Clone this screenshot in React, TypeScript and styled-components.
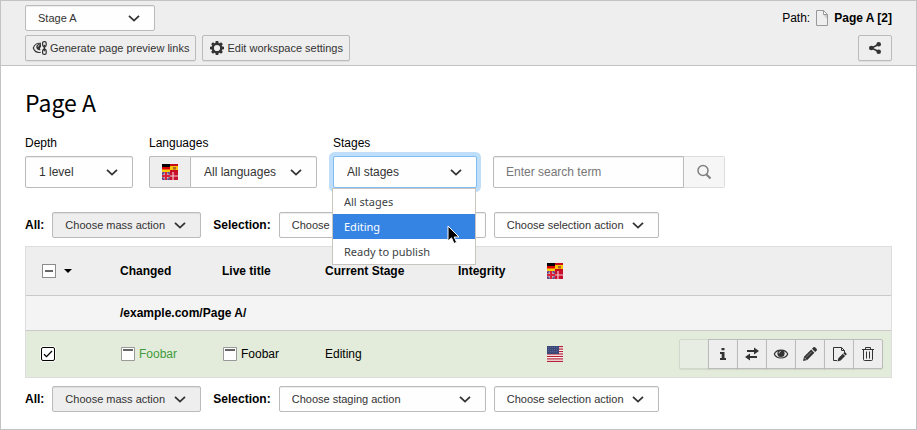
import React, { useEffect, useRef } from "react";
import styled, { createGlobalStyle, css } from "styled-components";

const GlobalStyle = createGlobalStyle`
  *, *::before, *::after { box-sizing: border-box; }
  body {
    margin: 0;
    background: #fff;
    color: #000;
    font: 12px/16px "Liberation Sans", Arial, sans-serif;
  }
  button, input, select { font-family: inherit; margin: 0; }
  svg { display: block; flex: none; }
`;

/* ---------- layout ---------- */

const Frame = styled.div`
  min-height: 100vh;
  border: 1px solid #c3c3c3;
`;

const DocHeader = styled.header`
  display: flex;
  flex-direction: column;
  gap: 4px;
  padding: 4px 24px;
  background: #eee;
  border-bottom: 1px solid #c3c3c3;
`;

const HeaderRow = styled.div`
  display: flex;
  align-items: center;
  justify-content: space-between;
`;

const ButtonBar = styled.div`
  display: flex;
  gap: 6px;
`;

const PathInfo = styled.div`
  display: flex;
  align-items: center;
  gap: 4px;
`;

const Content = styled.main`
  padding: 24px 24px 8px;
`;

const Title = styled.h1`
  margin: 0 0 21px;
  font: 400 23px/24px "Noto Sans CJK SC", "Noto Sans", sans-serif;
`;

const Filters = styled.form`
  display: flex;
  align-items: flex-end;
  gap: 16px;
  margin-bottom: 24px;
`;

const Field = styled.div`
  display: flex;
  flex-direction: column;
  gap: 5px;
`;

const InputGroup = styled.div`
  display: flex;
`;

const ActionBar = styled.div`
  display: flex;
  align-items: center;
  gap: 8px;
  margin: 8px 0;
`;

const ActionLabel = styled.label<{ $spaced?: boolean }>`
  font-weight: 700;
  margin-left: ${(p) => (p.$spaced ? 4 : 0)}px;
`;

/* ---------- controls ---------- */

const SelectWrap = styled.div<{ $width: number }>`
  position: relative;
  width: ${(p) => p.$width}px;
`;

const SelectBox = styled.select<{ $small?: boolean; $muted?: boolean; $focus?: boolean; $joined?: boolean }>`
  display: block;
  appearance: none;
  width: 100%;
  height: ${(p) => (p.$small ? 26 : 32)}px;
  padding: 0 32px 0 ${(p) => (p.$small ? 12 : 13)}px;
  border: 1px solid #bbb;
  border-radius: ${(p) => (p.$joined ? "0 2px 2px 0" : "2px")};
  background: ${(p) => (p.$muted ? "#eee" : "#fefefe")};
  color: #333;
  font-size: ${(p) => (p.$small ? 11 : 12)}px;
  box-shadow: inset 0 1px 1px rgba(0, 0, 0, 0.075);
  outline: none;
  ${(p) =>
    p.$focus &&
    css`
      border-color: #80bcf2;
      box-shadow: 0 0 0 4px #bfdef9;
    `}
`;

const Arrow = styled.svg`
  position: absolute;
  right: 15px;
  top: 50%;
  margin-top: -3px;
  pointer-events: none;
`;

const Addon = styled.span`
  display: flex;
  align-items: center;
  justify-content: center;
  width: 41px;
  border: 1px solid #bbb;
  border-right: 0;
  border-radius: 2px 0 0 2px;
  background: #eee;
`;

const SearchInput = styled.input`
  width: 191px;
  height: 32px;
  padding: 0 12px;
  border: 1px solid #bbb;
  border-radius: 2px 0 0 2px;
  background: #fefefe;
  color: #333;
  font-size: 12px;
  box-shadow: inset 0 1px 1px rgba(0, 0, 0, 0.075);
  &::placeholder { color: #777; opacity: 1; }
`;

const SearchButton = styled.button`
  display: flex;
  align-items: center;
  justify-content: center;
  width: 41px;
  padding: 0;
  border: 1px solid #ddd;
  border-left: 0;
  border-radius: 0 2px 2px 0;
  background: #f6f6f6;
`;

const Button = styled.button`
  display: flex;
  align-items: center;
  justify-content: center;
  gap: 2px;
  min-width: 34px;
  height: 26px;
  padding: 0 6px;
  border: 1px solid #bbb;
  border-radius: 2px;
  background: #eee;
  color: #333;
  font-size: 11px;
  box-shadow: 0 1px 1px rgba(0, 0, 0, 0.07);
`;

/* ---------- open option list ---------- */

const Options = styled.ul`
  position: absolute;
  z-index: 2;
  top: 100%;
  left: -1px;
  width: 100%;
  margin: 0;
  padding: 0;
  list-style: none;
  border: 1px solid #c8c5c0;
  background: #fff;
  color: #3d4245;
  font: 11px/25px "Noto Sans", sans-serif;
`;

const Option = styled.li<{ $active?: boolean }>`
  padding: 0 11px;
  background: ${(p) => (p.$active ? "#3584e4" : "transparent")};
  color: ${(p) => (p.$active ? "#fff" : "inherit")};
`;

const Pointer = styled.svg`
  position: absolute;
  z-index: 3;
  top: 69px;
  left: 114px;
`;

/* ---------- table ---------- */

const Table = styled.table`
  width: 100%;
  table-layout: fixed;
  border-collapse: separate;
  border-spacing: 0;
  border: 1px solid #ddd;
`;

const Col = styled.col<{ $width?: number }>`
  width: ${(p) => (p.$width ? `${p.$width}px` : "auto")};
`;

const Row = styled.tr<{ $height: number; $tone: string }>`
  height: ${(p) => p.$height}px;
  background: ${(p) => p.$tone};
  tbody > &:last-child > td { border-bottom: 0; }
`;

const Head = styled.th`
  padding: 0 8px;
  text-align: left;
  white-space: nowrap;
  border-bottom: 1px solid #c9c9c9;
`;

const Cell = styled.td`
  padding: 0 8px;
  border-bottom: 1px solid #c9c9c9;
`;

const CheckCell = styled.div<{ $head?: boolean }>`
  display: flex;
  align-items: center;
  gap: 8px;
  padding-left: ${(p) => (p.$head ? 8 : 7)}px;
`;

const Check = styled.input<{ $head?: boolean }>`
  appearance: none;
  grid-area: 1 / 1;
  width: 14px;
  height: 14px;
  margin: 0;
  border: 1px solid ${(p) => (p.$head ? "#8c8c8c" : "#000")};
  border-radius: ${(p) => (p.$head ? 0 : 2)}px;
  background: #fff;
  box-shadow: ${(p) => (p.$head ? "none" : "0 0 0 1px #f4f8f0")};
`;

const CheckStack = styled.span`
  display: grid;
  place-items: center;
  svg { grid-area: 1 / 1; z-index: 1; pointer-events: none; }
`;

const CaretButton = styled.button`
  padding: 0;
  border: 0;
  background: none;
`;

const Record = styled.span<{ $changed?: boolean }>`
  display: flex;
  align-items: center;
  gap: 3px;
  color: ${(p) => (p.$changed ? "#3f9b3c" : "inherit")};
`;

const IconGroup = styled.div`
  display: flex;
  justify-content: flex-end;
`;

const IconButton = styled.button`
  display: flex;
  align-items: center;
  justify-content: center;
  width: 30px;
  height: 30px;
  padding: 0;
  border: 1px solid #bbb;
  background: #eee;
  color: #333;
  box-shadow: 0 1px 1px rgba(0, 0, 0, 0.07);
  & + & { margin-left: -1px; }
  &:first-child { border-radius: 2px 0 0 2px; }
  &:last-child { border-radius: 0 2px 2px 0; }
  &:disabled { border-color: #d2d7cd; background: #e8ede3; }
`;

/* ---------- icons ---------- */

const Svg = ({ children }: { children: React.ReactNode }) => (
  <svg width="16" height="16" viewBox="0 0 16 16" aria-hidden="true">{children}</svg>
);

const Chevron = () => (
  <Arrow width="12" height="7" viewBox="0 0 12 7" fill="none" stroke="#333" strokeWidth="1.800" aria-hidden="true">
    <path d="M1 .8 6 5.600 11 .8" />
  </Arrow>
);

const PreviewLinksIcon = () => (
  <Svg>
    <path d="M9 3.400C5.200 2.600 2.300 5 1.300 8c1.200 3.400 4 5 7.500 4.300" fill="none" stroke="#333" strokeWidth="1.100" />
    <path d="M9 4.200a3.200 3.200 0 1 0-.5 5.800L7.800 8 9 7z" fill="#333" />
    <path d="M6 6.800c0-1 .6-1.700 1.500-1.900" stroke="#ddd" strokeWidth="1" fill="none" />
    <rect x="10.600" y="1.600" width="3.600" height="5" rx="1.500" fill="none" stroke="#333" strokeWidth="1.200" />
    <rect x="10.600" y="9.400" width="3.600" height="5" rx="1.500" fill="none" stroke="#333" strokeWidth="1.200" />
    <path d="M12.400 4.800v6.400" stroke="#333" strokeWidth="1.700" />
  </Svg>
);

const GearIcon = () => (
  <Svg>
    <g fill="#333">
      {[0, 45, 90, 135].map((a) => (
        <path key={a} transform={`rotate(${a} 8 8)`} d="M6.700 1h2.600l.5 3H6.200zM6.700 15h2.600l.5-3H6.200z" />
      ))}
    </g>
    <circle cx="8" cy="8" r="4.200" fill="#eee" stroke="#333" strokeWidth="2.200" />
  </Svg>
);

const ShareIcon = () => (
  <Svg>
    <path d="M11.500 4.500 4.500 8l7 3.500" fill="none" stroke="#333" strokeWidth="1.500" />
    <g fill="#333">
      <circle cx="11.700" cy="4.300" r="2.300" />
      <circle cx="4.300" cy="8" r="2.300" />
      <circle cx="11.700" cy="11.700" r="2.300" />
    </g>
  </Svg>
);

const PageIcon = () => (
  <Svg>
    <path d="M2.500.5h7l4 4v11h-11z" fill="#efefef" stroke="#999" />
    <path d="M9.500.5v4h4z" fill="#fff" stroke="#999" />
    <path d="M9.500 5h3.500v4z" fill="#ccc" />
  </Svg>
);

const SearchIcon = () => (
  <Svg>
    <circle cx="7" cy="6.500" r="5" fill="none" stroke="#808080" strokeWidth="1.500" />
    <path d="m10.500 10.500 4 4" stroke="#808080" strokeWidth="2.200" />
  </Svg>
);

const ContentIcon = () => (
  <Svg>
    <path d="M1.500 1.500h13v13h-13z" fill="#fff" stroke="#999" />
    <path d="M3 3h10v2H3z" fill="#666" />
  </Svg>
);

const LanguagesIcon = () => (
  <Svg>
    <path fill="#000" d="M0 0h8v3H0z" />
    <path fill="#d00" d="M0 3h8v3H0z" />
    <path fill="#ffce00" d="M0 5.500h8V8H0z" />
    <path fill="#c60b1e" d="M8 0h8v8H8z" />
    <path fill="#ffc400" d="M8 2h8v4H8z" />
    <path fill="#a8652b" d="M11 3h3v2.500h-3z" />
    <path fill="#00247d" d="M0 8h8v8H0z" />
    <path d="m0 8 8 8M8 8l-8 8" stroke="#9aa5cc" strokeWidth="1.200" />
    <path d="m0 8 8 8M8 8l-8 8" stroke="#cf142b" strokeWidth=".6" />
    <path d="M4 8v8M0 12h8" stroke="#f3c9cf" strokeWidth="3" />
    <path d="M4 8v8M0 12h8" stroke="#dc2036" strokeWidth="2" />
    <path fill="#c8102e" d="M8 8h8v8H8z" />
    <path d="M11 8v8M8 12h8" stroke="#f5c6ce" strokeWidth="1.200" />
  </Svg>
);

const UsFlagIcon = () => (
  <Svg>
    <path fill="#fff" d="M0 0h16v16H0z" />
    {[0, 1, 2, 3, 4, 5, 6].map((i) => (
      <rect key={i} y={i * 2.46} width="16" height="1.230" fill="#b22234" />
    ))}
    <path fill="#3c4878" d="M0 0h12v8H0z" />
    <path d="M1 1.500h10M1 3.500h10M1 5.500h10" stroke="#68749c" strokeWidth=".6" strokeDasharray="1 1" />
  </Svg>
);

const InfoIcon = () => (
  <Svg>
    <path fill="currentColor" d="M6.500 2h3v2.200h-3zM5 6h4.500v6H11v2H5v-2h1.700V8H5z" />
  </Svg>
);

const SwapIcon = () => (
  <Svg>
    <path fill="currentColor" d="M3 4h7V1.500L15 5l-5 3.500V6H3zM13 10H6V7.500L1 11l5 3.500V12h7z" />
  </Svg>
);

const EyeIcon = () => (
  <Svg>
    <path d="M1.300 8C3.500 2.700 12.500 2.700 14.700 8c-2.200 5.300-11.200 5.300-13.400 0z" fill="none" stroke="currentColor" strokeWidth="1.200" />
    <circle cx="8" cy="7.500" r="3.600" fill="currentColor" />
    <path d="M6 7.300c0-1 .7-1.800 1.700-1.900" stroke="#ddd" strokeWidth="1" fill="none" />
  </Svg>
);

const PencilIcon = () => (
  <Svg>
    <path fill="currentColor" d="M1 15l1-4.200L9.200 3.600l3.200 3.200L5.200 14zM10 2.800l1.500-1.500c.5-.5 1-.5 1.500 0L14.700 3c.5.500.5 1 0 1.500L13.200 6z" />
    <path d="M4 11.500 9.700 5.800" stroke="#aaa" strokeWidth=".7" />
    <path d="M2.500 11.800 4.200 13.500" stroke="#eee" strokeWidth=".8" />
  </Svg>
);

const PageEditIcon = () => (
  <Svg>
    <path d="M6 14.500H2.500v-13h8l3 3V7M10.500 1.500v3h3" fill="none" stroke="currentColor" />
    <path fill="currentColor" d="m6.500 15.500.8-3.200 4.500-4.500 2.300 2.300-4.500 4.500zM12.300 7.300l1-1c.3-.3.6-.3.9 0l1.400 1.400c.3.300.3.600 0 .9l-1 1z" />
  </Svg>
);

const TrashIcon = () => (
  <Svg>
    <path d="M2 3.500h12M5.500 3V1.500h5V3M3.500 4v9.500q0 1 1 1h7q1 0 1-1V4M6.500 5.500v7M9.500 5.500v7" fill="none" stroke="currentColor" />
  </Svg>
);

/* ---------- composed parts ---------- */

type SelectProps = {
  id: string;
  width: number;
  options: string[];
  label?: string;
  small?: boolean;
  muted?: boolean;
  focus?: boolean;
  joined?: boolean;
  children?: React.ReactNode;
};

const Select = ({ id, width, options, label, small, muted, focus, joined, children }: SelectProps) => (
  <SelectWrap $width={width}>
    <SelectBox id={id} aria-label={label} $small={small} $muted={muted} $focus={focus} $joined={joined}>
      {options.map((o) => (
        <option key={o}>{o}</option>
      ))}
    </SelectBox>
    <Chevron />
    {children}
  </SelectWrap>
);

const Actions = ({ name }: { name: string }) => (
  <ActionBar>
    <ActionLabel htmlFor={`${name}-mass`}>All:</ActionLabel>
    <Select id={`${name}-mass`} width={149} small muted options={["Choose mass action"]} />
    <ActionLabel $spaced htmlFor={`${name}-staging`}>Selection:</ActionLabel>
    <Select id={`${name}-staging`} width={207} small options={["Choose staging action"]} />
    <Select id={`${name}-selection`} width={165} small label="Selection action" options={["Choose selection action"]} />
  </ActionBar>
);

const rowActions = [
  { label: "Show information", Icon: InfoIcon },
  { label: "Swap versions", Icon: SwapIcon },
  { label: "Preview", Icon: EyeIcon },
  { label: "Edit element", Icon: PencilIcon },
  { label: "Open page", Icon: PageEditIcon },
  { label: "Discard", Icon: TrashIcon },
];

const stages = ["All stages", "Editing", "Ready to publish"];

export default function App() {
  const allRef = useRef<HTMLInputElement>(null);
  useEffect(() => {
    if (allRef.current) allRef.current.indeterminate = true;
  }, []);

  return (
    <Frame>
      <GlobalStyle />
      <DocHeader>
        <HeaderRow>
          <Select id="stage" width={130} small label="Workspace" options={["Stage A"]} />
          <PathInfo>
            Path: <PageIcon /> <strong>Page A [2]</strong>
          </PathInfo>
        </HeaderRow>
        <HeaderRow>
          <ButtonBar>
            <Button type="button"><PreviewLinksIcon />Generate page preview links</Button>
            <Button type="button"><GearIcon />Edit workspace settings</Button>
          </ButtonBar>
          <Button type="button" aria-label="Share"><ShareIcon /></Button>
        </HeaderRow>
      </DocHeader>
      <Content>
        <Title>Page A</Title>
        <Filters onSubmit={(e) => e.preventDefault()}>
          <Field>
            <label htmlFor="depth">Depth</label>
            <Select id="depth" width={108} options={["1 level"]} />
          </Field>
          <Field>
            <label htmlFor="languages">Languages</label>
            <InputGroup>
              <Addon><LanguagesIcon /></Addon>
              <Select id="languages" width={127} joined options={["All languages"]} />
            </InputGroup>
          </Field>
          <Field>
            <label htmlFor="stages">Stages</label>
            <Select id="stages" width={144} focus options={stages}>
              <Options role="listbox" aria-label="Stages">
                {stages.map((s) => (
                  <Option key={s} role="option" aria-selected={s === "Editing"} $active={s === "Editing"}>{s}</Option>
                ))}
              </Options>
              <Pointer width="13" height="20" viewBox="0 0 13 20" aria-hidden="true">
                <path d="M1 1v15l3.500-3.200L7 18.500l2.600-1.200L7.200 12H12z" fill="#000" stroke="#fff" />
              </Pointer>
            </Select>
          </Field>
          <InputGroup>
            <SearchInput type="text" aria-label="Search term" placeholder="Enter search term" />
            <SearchButton type="submit" aria-label="Search"><SearchIcon /></SearchButton>
          </InputGroup>
        </Filters>
        <Actions name="top" />
        <Table>
          <colgroup>
            <Col $width={86} />
            <Col $width={102} />
            <Col $width={103} />
            <Col $width={133} />
            <Col $width={89} />
            <Col $width={60} />
            <Col />
          </colgroup>
          <thead>
            <Row $height={49} $tone="#eee">
              <Head>
                <CheckCell $head>
                  <CheckStack>
                    <Check ref={allRef} type="checkbox" aria-label="Select all" $head />
                    <svg width="8" height="2" viewBox="0 0 8 2" aria-hidden="true"><path d="M0 0h8v2H0z" fill="#666" /></svg>
                  </CheckStack>
                  <CaretButton type="button" aria-label="Selection options">
                    <svg width="8" height="4" viewBox="0 0 8 4" aria-hidden="true"><path d="M0 0h8L4 4z" /></svg>
                  </CaretButton>
                </CheckCell>
              </Head>
              <Head>Changed</Head>
              <Head>Live title</Head>
              <Head>Current Stage</Head>
              <Head>Integrity</Head>
              <Head><LanguagesIcon /></Head>
              <Head aria-label="Actions" />
            </Row>
          </thead>
          <tbody>
            <Row $height={35} $tone="#f4f4f4">
              <Cell />
              <Cell colSpan={6}><strong>/example.com/Page A/</strong></Cell>
            </Row>
            <Row $height={46} $tone="#e3ecda">
              <Cell>
                <CheckCell>
                  <CheckStack>
                    <Check type="checkbox" aria-label="Select Foobar" defaultChecked />
                    <svg width="10" height="8" viewBox="0 0 10 8" fill="none" stroke="#000" strokeWidth="1.300" aria-hidden="true"><path d="M1 4.200 3.500 6.600 9 1" /></svg>
                  </CheckStack>
                </CheckCell>
              </Cell>
              <Cell><Record $changed><ContentIcon />Foobar</Record></Cell>
              <Cell><Record><ContentIcon />Foobar</Record></Cell>
              <Cell>Editing</Cell>
              <Cell />
              <Cell><UsFlagIcon /></Cell>
              <Cell>
                <IconGroup>
                  <IconButton type="button" disabled aria-label="Unavailable" />
                  {rowActions.map(({ label, Icon }) => (
                    <IconButton key={label} type="button" aria-label={label}><Icon /></IconButton>
                  ))}
                </IconGroup>
              </Cell>
            </Row>
          </tbody>
        </Table>
        <Actions name="bottom" />
      </Content>
    </Frame>
  );
}
